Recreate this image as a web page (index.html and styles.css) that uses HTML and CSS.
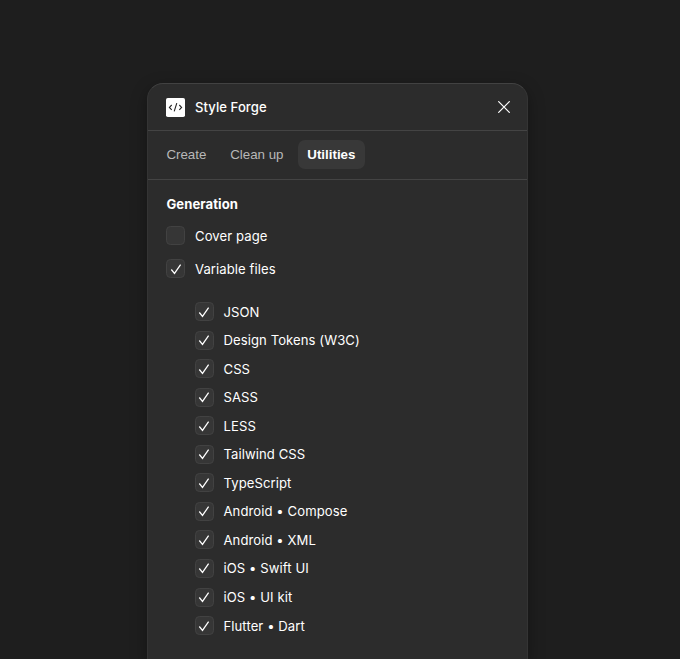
FILE: index.html
```html
<!DOCTYPE html>
<html lang="en">
<head>
<meta charset="utf-8">
<title>Style Forge</title>
<link rel="stylesheet" href="styles.css">
</head>
<body>
<main class="panel">
  <header class="header">
    <svg class="logo" width="19" height="19" viewBox="0 0 19 19"><rect width="19" height="19" rx="1.8" fill="#fff"/><path d="M5.7 7 3.4 9.4l2.3 2.4M13.3 7l2.3 2.4-2.3 2.4M10.8 5.2l-2.6 8.2" fill="none" stroke="#222" stroke-width="1.1"/></svg>
    <h1 class="title">Style Forge</h1>
    <svg class="close" width="12" height="12" viewBox="0 0 12 12"><path d="M.3.3l11.4 11.4M11.7.3.3 11.7" stroke="#fff" stroke-width="1.2"/></svg>
  </header>
  <nav class="tabs"><span class="tab">Create</span><span class="tab">Clean up</span><span class="tab active">Utilities</span></nav>
  <section class="content">
    <h2 class="heading">Generation</h2>
    <div class="row main"><span class="box"></span><span>Cover page</span></div>
    <div class="row main"><span class="box checked"></span><span>Variable files</span></div>
    <div class="files" id="files"></div>
  </section>
</main>
<script src="script.js"></script>
</body>
</html>
```
FILE: script.js
```js
const check = '<svg width="12" height="12" viewBox="0 0 12 12"><path d="M1.3 6.5l3.2 3.9L10.6 1.6" fill="none" stroke="#fff" stroke-width="1.25"/></svg>';
const files = ["JSON", "Design Tokens (W3C)", "CSS", "SASS", "LESS", "Tailwind CSS", "TypeScript", "Android • Compose", "Android • XML", "iOS • Swift UI", "iOS • UI kit", "Flutter • Dart"];
document.getElementById("files").innerHTML = files.map(name => `<div class="row"><span class="box checked"></span><span>${name}</span></div>`).join("");
document.querySelectorAll(".checked").forEach(box => { box.innerHTML = check; });
```
FILE: styles.css
```css
* { box-sizing: border-box; }
body { margin: 0; height: 659px; overflow: hidden; background: #1e1e1e; color: #fff; font: 13.1px/20px Inter, sans-serif; letter-spacing: .08px; padding-top: 83px; }
.panel { width: 381px; height: 576px; margin-left: 147px; background: #2c2c2c; border: 1px solid #343434; border-top-color: #424242; border-bottom: 0; border-radius: 16px 16px 0 0; box-shadow: 0 5px 16px rgba(0,0,0,.35); }
.header { display: flex; align-items: center; height: 47px; padding: 0 17px 0 18.4px; border-bottom: 1px solid #444; }
.title { margin: 0 auto 0 9.6px; font-size: 13.1px; font-weight: 500; letter-spacing: .06px; }
.tabs { display: flex; align-items: center; height: 49px; padding: 0 0 1px 8.7px; border-bottom: 1px solid #444; color: #b8b8b8; font-family: "Liberation Sans", Arial, sans-serif; font-size: 13.33px; letter-spacing: 0; }
.tab { height: 29px; line-height: 30px; padding: 0 9.7px; margin-right: 4.4px; }
.active { color: #fff; background: #383838; border-radius: 7px; font-weight: 700; }
.content { padding: 14px 18px 0 18.4px; }
.heading { margin: 0 0 5px; font-size: 13.1px; line-height: 20px; font-weight: 700; }
.row { display: flex; align-items: center; gap: 9.6px; height: 28.55px; }
.main { height: 33px; }
.box { display: flex; align-items: center; justify-content: center; width: 19px; height: 19px; border: 1px solid #424242; border-radius: 4.5px; background: #363636; }
.files { padding: 12.3px 0 0 28.5px; }
```
